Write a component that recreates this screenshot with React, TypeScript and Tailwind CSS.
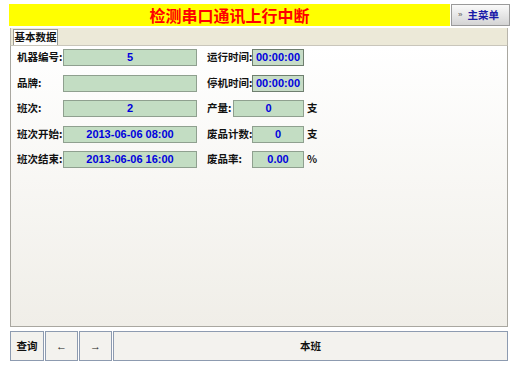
import React from "react";

const cjk = { fontFamily: '"Noto Sans CJK SC", "Liberation Sans", sans-serif' };
const num = { fontFamily: '"Liberation Sans", "Noto Sans CJK SC", sans-serif' };

function Val({ w, children, time }: { w: string; children?: React.ReactNode; time?: boolean }) {
  return (
    <div
      className={`${w} h-[17px] flex items-center justify-center border ${
        time ? "border-[#6f7f6f] bg-[#c7dcc7]" : "border-[#8fa08f] bg-[#c3ddc3]"
      } text-[11px] font-bold text-[#0000dd] leading-none`}
      style={num}
    >
      {children}
    </div>
  );
}

function Label({ w, children }: { w: string; children: React.ReactNode }) {
  return (
    <div className={`${w} text-[10.5px] font-bold text-[#111] leading-none whitespace-nowrap`} style={cjk}>
      {children}
    </div>
  );
}

function Unit({ children }: { children: React.ReactNode }) {
  return (
    <div className="ml-[3px] text-[10.5px] font-bold text-[#111] leading-none" style={cjk}>
      {children}
    </div>
  );
}

export default function App() {
  return (
    <div className="w-[517px] h-[365px] bg-white overflow-hidden" style={cjk}>
      {/* header */}
      <div className="flex pt-[4px] pl-[9px] gap-[1px]">
        <div className="w-[441px] h-[22px] bg-[#ffff00] flex items-center justify-center">
          <span className="text-[16px] font-bold text-[#ff0000] leading-none" style={cjk}>
            检测串口通讯上行中断
          </span>
        </div>
        <div className="w-[59px] h-[22px] border border-[#9a9a9a] bg-gradient-to-b from-[#fafafa] to-[#d4d4d4] flex items-center pl-[6px] gap-[5px]">
          <span className="text-[8px] text-[#555] leading-none" style={num}>»</span>
          <span className="text-[10.5px] font-bold text-[#1a1aa8] leading-none" style={cjk}>主菜单</span>
        </div>
      </div>

      {/* panel */}
      <div className="ml-[10px] mt-[2px] w-[498px]">
        <div className="h-[17px] bg-[#ece9d8] border-x border-[#b8b5ab] flex items-end pl-[2px]">
          <div className="h-[16px] w-[45px] bg-white border border-b-0 border-[#9d9b92] flex items-center justify-center text-[10.5px] font-bold text-[#111] leading-none" style={cjk}>
            基本数据
          </div>
        </div>
        <div className="h-[282px] border border-[#a9a7a0] border-t-[#c9c6bb] bg-gradient-to-b from-[#ffffff] to-[#f0eee8] pt-[3px] pl-[6px] flex flex-col gap-[8.5px]">
          <div className="flex items-center h-[17px]">
            <Label w="w-[46px]">机器编号:</Label>
            <Val w="w-[134px]">5</Val>
            <div className="w-[10px]" />
            <Label w="w-[45px]">运行时间:</Label>
            <Val w="w-[52px]" time>00:00:00</Val>
          </div>
          <div className="flex items-center h-[17px]">
            <Label w="w-[46px]">品牌:</Label>
            <Val w="w-[134px]" />
            <div className="w-[10px]" />
            <Label w="w-[45px]">停机时间:</Label>
            <Val w="w-[52px]" time>00:00:00</Val>
          </div>
          <div className="flex items-center h-[17px]">
            <Label w="w-[46px]">班次:</Label>
            <Val w="w-[134px]">2</Val>
            <div className="w-[10px]" />
            <Label w="w-[26px]">产量:</Label>
            <Val w="w-[71px]">0</Val>
            <Unit>支</Unit>
          </div>
          <div className="flex items-center h-[17px]">
            <Label w="w-[46px]">班次开始:</Label>
            <Val w="w-[134px]">2013-06-06 08:00</Val>
            <div className="w-[10px]" />
            <Label w="w-[45px]">废品计数:</Label>
            <Val w="w-[52px]">0</Val>
            <Unit>支</Unit>
          </div>
          <div className="flex items-center h-[17px]">
            <Label w="w-[46px]">班次结束:</Label>
            <Val w="w-[134px]">2013-06-06 16:00</Val>
            <div className="w-[10px]" />
            <Label w="w-[45px]">废品率:</Label>
            <Val w="w-[52px]">0.00</Val>
            <Unit>%</Unit>
          </div>
        </div>

        {/* bottom buttons */}
        <div className="mt-[4px] flex h-[30px] gap-[1px]">
          <div className="w-[34px] h-full border border-[#8d9bb0] bg-[#f3f2ee] flex items-center justify-center text-[10.5px] font-bold text-[#111]" style={cjk}>
            查询
          </div>
          <div className="w-[33px] h-full border border-[#8d9bb0] bg-[#f3f2ee] flex items-center justify-center text-[11px] text-[#222]" style={num}>
            ←
          </div>
          <div className="w-[33px] h-full border border-[#8d9bb0] bg-[#f3f2ee] flex items-center justify-center text-[11px] text-[#222]" style={num}>
            →
          </div>
          <div className="flex-1 h-full border border-[#8d9bb0] bg-[#f3f2ee] flex items-center justify-center text-[10.5px] font-bold text-[#111]" style={cjk}>
            本班
          </div>
        </div>
      </div>
    </div>
  );
}
